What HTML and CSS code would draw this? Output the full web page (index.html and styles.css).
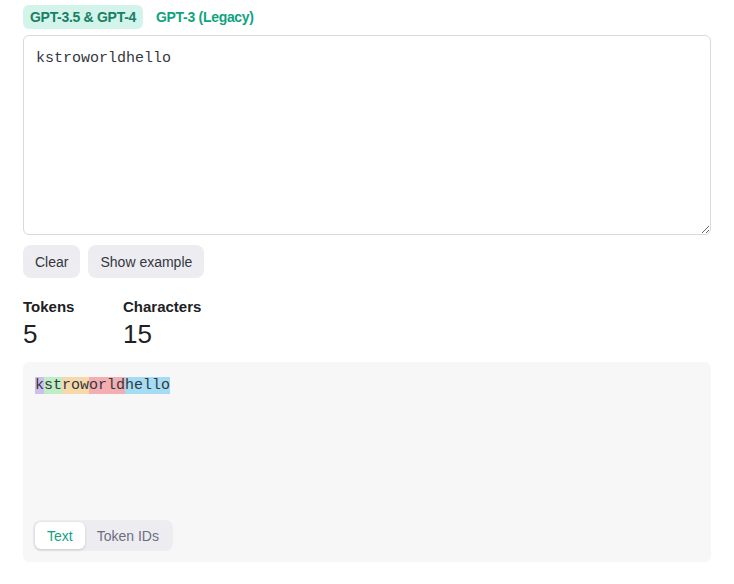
FILE: index.html
```html
<!DOCTYPE html>
<html>
<head>
<meta charset="utf-8">
<link rel="stylesheet" href="styles.css">
</head>
<body>
<div class="page">
  <div class="tabs">
    <span class="tab active">GPT-3.5 &amp; GPT-4</span>
    <span class="tab">GPT-3 (Legacy)</span>
  </div>
  <textarea class="input">kstroworldhello</textarea>
  <div class="buttons">
    <button class="btn">Clear</button>
    <button class="btn">Show example</button>
  </div>
  <div class="stats">
    <div class="stat">
      <div class="stat-label">Tokens</div>
      <div class="stat-value">5</div>
    </div>
    <div class="stat">
      <div class="stat-label">Characters</div>
      <div class="stat-value">15</div>
    </div>
  </div>
  <div class="output">
    <div class="tokens"><span class="t0">k</span><span class="t1">st</span><span class="t2">row</span><span class="t3">orld</span><span class="t4">hello</span></div>
    <div class="toggle">
      <span class="opt on">Text</span>
      <span class="opt">Token IDs</span>
    </div>
  </div>
</div>
</body>
</html>
```
FILE: styles.css
```css
* { box-sizing: border-box; }
html, body { margin: 0; padding: 0; background: #fff; }
body {
  font-family: "Liberation Sans", Arial, sans-serif;
  color: #202123;
}
.page {
  padding: 5px 23px 0 23px;
  display: flex;
  flex-direction: column;
}
.tabs {
  display: flex;
  gap: 6px;
  height: 24px;
}
.tab {
  display: flex;
  align-items: center;
  padding: 0 7px;
  font-size: 14px;
  font-weight: 700;
  color: #10a37f;
  border-radius: 6px;
  letter-spacing: -0.3px;
}
.tab.active {
  background: #d2f4ea;
  color: #1a7f64;
}
.input {
  margin-top: 6px;
  width: 100%;
  height: 200px;
  border: 1px solid #d9d9e3;
  border-radius: 6px;
  padding: 12px 12px;
  font-family: "Liberation Mono", "DejaVu Sans Mono", monospace;
  font-size: 15px;
  line-height: 22px;
  color: #353740;
  resize: vertical;
  outline: none;
  display: block;
}
.buttons {
  display: flex;
  gap: 8px;
  margin-top: 10px;
}
.btn {
  height: 33px;
  padding: 0 12px;
  border: none;
  border-radius: 8px;
  background: #ececf1;
  font-family: "Liberation Sans", Arial, sans-serif;
  font-size: 14px;
  color: #353740;
}
.stats {
  display: grid;
  grid-template-columns: 100px auto;
  margin-top: 20px;
}
.stat-label {
  font-size: 15px;
  font-weight: 700;
  line-height: 18px;
  color: #202123;
}
.stat-value {
  font-size: 26px;
  line-height: 34px;
  margin-top: 1px;
  color: #202123;
}
.output {
  margin-top: 11px;
  height: 200px;
  background: #f7f7f8;
  border-radius: 6px;
  padding: 15px 12px 11px 12px;
  display: flex;
  flex-direction: column;
  align-items: flex-start;
}
.tokens {
  font-family: "Liberation Mono", "DejaVu Sans Mono", monospace;
  font-size: 15px;
  line-height: 17px;
  color: #353740;
}
.t0 { background: rgba(107, 64, 216, 0.3); }
.t1 { background: rgba(104, 222, 122, 0.4); }
.t2 { background: rgba(244, 172, 54, 0.4); }
.t3 { background: rgba(239, 65, 70, 0.4); }
.t4 { background: rgba(39, 181, 234, 0.4); }
.toggle {
  margin-top: auto;
  margin-left: -2px;
  display: flex;
  background: #ececf1;
  border-radius: 8px;
  padding: 2px;
  height: 31px;
}
.opt {
  display: flex;
  align-items: center;
  padding: 0 12px;
  font-size: 14px;
  color: #6e6e80;
  border-radius: 6px;
}
.opt.on {
  background: #fff;
  color: #10a37f;
  box-shadow: 0 1px 3px rgba(0, 0, 0, 0.15);
}
.opt + .opt { padding: 0 12px 0 12px; }
```
